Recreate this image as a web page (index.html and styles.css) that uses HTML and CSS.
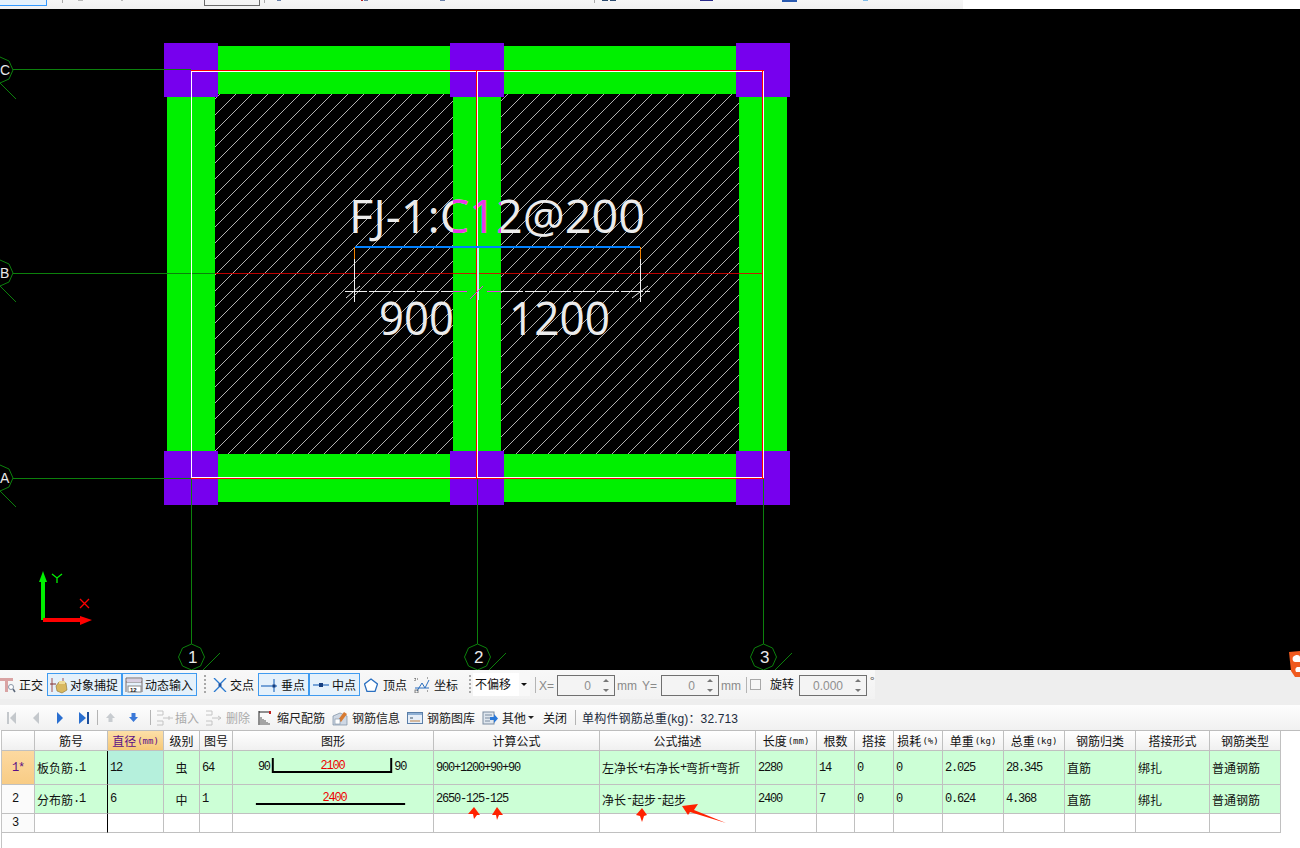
FILE: index.html
```html
<!DOCTYPE html>
<html lang="zh-CN">
<head>
<meta charset="utf-8">
<title>钢筋编辑</title>
<link rel="stylesheet" href="styles.css">
</head>
<body>
<div class="app">
  <div class="topstrip">
    <div class="topbar">
      <span class="top-btn"></span><span class="top-sep s1"></span><span class="top-mark m1"></span><span class="top-mark m2"></span>
      <span class="top-input"></span><span class="top-sep s2"></span><span class="top-mark m3"></span>
      <span class="top-mark m4"></span><span class="top-mark m5"></span><span class="top-mark m6"></span>
      <span class="top-sep s3"></span><span class="top-mark m7"></span><span class="top-mark m8"></span>
      <span class="top-mark m9"></span><span class="top-mark m10"></span><span class="top-mark m11"></span>
    </div>
  </div>

  <svg class="canvas" viewBox="0 9 1300 661" width="1300" height="661" xmlns="http://www.w3.org/2000/svg">
    <defs>
      <pattern id="hatch" patternUnits="userSpaceOnUse" width="16" height="16" patternTransform="translate(10 0)">
        <line x1="-1" y1="17" x2="17" y2="-1" stroke="#c4c4c4" stroke-width="0.9"/>
      </pattern>
      <clipPath id="midbeam"><rect x="453" y="190" width="48" height="60"/></clipPath>
    </defs>
    <rect x="0" y="9" width="1300" height="661" fill="#000"/>
    <rect x="215" y="94" width="238" height="360" fill="url(#hatch)"/>
    <rect x="501" y="94" width="238" height="360" fill="url(#hatch)"/>
    <g fill="#00f000">
      <rect x="218" y="46" width="232" height="48"/><rect x="504" y="46" width="232" height="48"/>
      <rect x="218" y="454" width="232" height="48"/><rect x="504" y="454" width="232" height="48"/>
      <rect x="167" y="97" width="48" height="354"/><rect x="453" y="97" width="48" height="354"/><rect x="739" y="97" width="48" height="354"/>
    </g>
    <g fill="#7700ee">
      <rect x="164" y="43" width="54" height="54"/><rect x="450" y="43" width="54" height="54"/><rect x="736" y="43" width="54" height="54"/>
      <rect x="164" y="451" width="54" height="54"/><rect x="450" y="451" width="54" height="54"/><rect x="736" y="451" width="54" height="54"/>
    </g>
    <g stroke="#0c800c" stroke-width="1" fill="none" shape-rendering="crispEdges">
      <path d="M13 69.500H191M13 478.500H191M13 273.500H215"/>
      <path d="M191.500 478V644M477.500 478V644M763.500 478V644"/>
    </g>
    <g stroke="#0c800c" stroke-width="1" fill="none">
      <polygon points="13,70 9,79 0,83 -9,79 -13,70 -9,61 0,57 9,61"/>
      <polygon points="13,273 9,282 0,286 -9,282 -13,273 -9,264 0,260 9,264"/>
      <polygon points="13,478 9,487 0,491 -9,487 -13,478 -9,469 0,465 9,469"/>
      <path d="M0 83L16 99M0 286L16 302M0 491L16 507"/>
      <polygon points="204.500,657 200.500,666 191.500,670 182.500,666 178.500,657 182.500,648 191.500,644 200.500,648"/>
      <polygon points="490.500,657 486.500,666 477.500,670 468.500,666 464.500,657 468.500,648 477.500,644 486.500,648"/>
      <polygon points="776.500,657 772.500,666 763.500,670 754.500,666 750.500,657 754.500,648 763.500,644 772.500,648"/>
      <path d="M203 670L220 653M489 670L506 653M775 670L792 653"/>
    </g>
    <g class="axis-label edge" fill="#e8e8e8">
      <text x="0" y="75">C</text><text x="0" y="278">B</text><text x="0" y="483">A</text>
    </g>
    <g class="axis-label" fill="#e8e8e8">
      <text x="188" y="663">1</text><text x="474" y="663">2</text><text x="760" y="663">3</text>
    </g>
    <path d="M215 273.500H763" stroke="#e00000" stroke-width="1" shape-rendering="crispEdges" opacity=".85"/>
    <g class="cad-text" fill="#ececec">
      <text x="349" y="233" textLength="296" lengthAdjust="spacingAndGlyphs">FJ-1:C12@200</text>
      <text x="379" y="335" textLength="75" lengthAdjust="spacingAndGlyphs">900</text>
      <text x="509" y="335" textLength="101" lengthAdjust="spacingAndGlyphs">1200</text>
    </g>
    <g class="cad-text" fill="#e838e8" clip-path="url(#midbeam)">
      <text x="349" y="233" textLength="296" lengthAdjust="spacingAndGlyphs">FJ-1:C12@200</text>
    </g>
    <g fill="none" shape-rendering="crispEdges">
      <path d="M191.500 70.500V478M477.500 70.500V478M763.500 70.500V478M191 71.500H764M191 477.500H764" stroke="#fff"/>
      <path d="M191 70.500H764M191 478.500H764" stroke="#ff0000"/>
      <path d="M476.500 70V478M762.500 70V478" stroke="#ff0000"/>
      <path d="M477.500 247V300" stroke="#b8fff4" stroke-width="2"/>
      <path d="M354.500 259V302M640.500 259V302" stroke="#f0f0f0"/>
      <path d="M345 291.500H453M501 291.500H650" stroke="#f0f0f0" stroke-dasharray="22 2"/>
      <path d="M453 291.500H467M487 291.500H501" stroke="#e838e8"/>
      <path d="M354.500 247V259M640.500 247V259" stroke="#f08000" stroke-width="1"/>
      <path d="M355 247H640" stroke="#0080ff" stroke-width="2"/>
    </g>
    <path d="M346 298L360 286M632 298L648 286" stroke="#e8e8e8" fill="none"/>
    <path d="M470 299L483 286" stroke="#e838e8" fill="none"/>
    <g>
      <path d="M41 620V582H39L42 574L43 571L44 574L47 582H45V620Z" fill="#00f000"/>
      <path d="M43 618H80V616L92 620L80 625V622H43Z" fill="#ff0000"/>
      <path d="M52 574L57 578L62 574M57 578V583" stroke="#00f000" stroke-width="1.300" fill="none"/>
      <path d="M80 599L89 608M89 599L80 608" stroke="#ff0000" stroke-width="1.300" fill="none"/>
    </g>
  </svg>

  <svg class="sogou" viewBox="0 0 12 26" width="12" height="26" xmlns="http://www.w3.org/2000/svg">
    <path d="M1 1L12 0V26H7L3 20Z" fill="#f05a1e"/>
    <path d="M5 6C8 3 12 4 12 6V11H7C5 11 4 8 5 6ZM9 16H12V21H8C7 19 7 17 9 16Z" fill="#fff"/>
  </svg>

  <div class="snapbar">
    <div class="snap-group">
      <div class="tool w-ortho">
        <svg class="ic16" viewBox="0 0 16 16"><path d="M0 1H13V4H8V15H5V4H0Z" fill="#d9a3a3"/><circle cx="11" cy="10" r="2.500" fill="#fff" stroke="#8a97a8"/><path d="M13 12L15 15" stroke="#5a6678" stroke-width="1.500"/></svg>
        <span>正交</span>
      </div>
      <div class="btn w-75">
        <svg class="ic18" viewBox="0 0 18 18"><path d="M2 2V16" stroke="#a05050"/><path d="M0 8H6" stroke="#803030"/><path d="M13 2V8" stroke="#a05050"/><path d="M6 10L9 6L16 7L17 14L12 17L7 15Z" fill="#d8b860" stroke="#8a7030" stroke-width=".6"/><rect x="9" y="5" width="6" height="3" fill="#eedc9a"/></svg>
        <span>对象捕捉</span>
      </div>
      <div class="btn w-75">
        <svg class="ic18" viewBox="0 0 18 18"><path d="M1 2H17M1 2V16M17 2V16M1 6H17" stroke="#7a6a6a" fill="none"/><rect x="2" y="3" width="14" height="3" fill="#d9cfe0"/><rect x="3" y="10" width="13" height="6" fill="#fff" stroke="#888"/><text class="icon-num" x="5" y="15.500">12</text></svg>
        <span>动态输入</span>
      </div>
      <span class="dots d1"></span>
      <div class="tool w-cross">
        <svg class="ic14" viewBox="0 0 14 14"><path d="M1 0L7 6L13 0M1 14L7 8L13 14" stroke="#2a7ad0" fill="none" stroke-width="1.300"/><rect x="5.500" y="5.500" width="3" height="3" fill="#1d4f9c"/></svg>
        <span>交点</span>
      </div>
      <div class="btn w-51">
        <svg class="ic18" viewBox="0 0 18 18"><path d="M0 10H16" stroke="#2a6fc0" stroke-width="1.200"/><path d="M13 3V16" stroke="#2a6fc0" stroke-width="1.200"/><rect x="11.500" y="8.500" width="3" height="3" fill="#163f80"/></svg>
        <span>垂点</span>
      </div>
      <div class="btn w-51">
        <svg class="ic18" viewBox="0 0 18 18"><path d="M1 9H17" stroke="#2a6fc0" stroke-width="1.200"/><rect x="7" y="7" width="4" height="4" fill="#163f80"/></svg>
        <span>中点</span>
      </div>
      <div class="tool w-vertex">
        <svg class="ic14" viewBox="0 0 14 14"><path d="M7 1L13.500 6L11 13.500H3L.5 6Z" fill="#fff" stroke="#2a6fc0" stroke-width="1.300"/></svg>
        <span>顶点</span>
      </div>
      <div class="tool w-coord">
        <svg class="ic16" viewBox="0 0 16 16"><path d="M3 14L8 6L11 11L15 3M1 11H15" stroke="#2a6fc0" fill="none"/><path d="M1 2H4M1 1V4M13 1H15M13 14H15" stroke="#555" fill="none" stroke-dasharray="1 1"/><rect x="1" y="13" width="3" height="3" fill="none" stroke="#555" stroke-width=".7"/></svg>
        <span>坐标</span>
      </div>
      <span class="dots d2"></span>
      <div class="combo">
        <span class="combo-value">不偏移</span>
        <span class="combo-arrow"></span>
      </div>
      <span class="vsep sep-a"></span>
      <span class="lbl w-xy">X=</span>
      <div class="spin w-58"><span>0</span><i class="spin-btns"><b class="up"></b><b class="down"></b></i></div>
      <span class="lbl w-mm1">mm</span>
      <span class="lbl w-xy2">Y=</span>
      <div class="spin w-58"><span>0</span><i class="spin-btns"><b class="up"></b><b class="down"></b></i></div>
      <span class="lbl w-mm2">mm</span>
      <span class="vsep sep-b"></span>
      <span class="check"></span>
      <span class="rot">旋转</span>
      <div class="spin w-68"><span>0.000</span><i class="spin-btns"><b class="up"></b><b class="down"></b></i></div>
      <span class="deg">°</span>
    </div>
  </div>

  <div class="actionbar">
    <svg class="nav" viewBox="0 0 10 12"><rect x="0" y="0" width="2" height="12" fill="#c4c8cc"/><path d="M9 0V12L3 6Z" fill="#c4c8cc"/></svg>
    <svg class="nav n2" viewBox="0 0 10 12"><path d="M8 0V12L2 6Z" fill="#c4c8cc"/></svg>
    <svg class="nav n2" viewBox="0 0 10 12"><path d="M2 0V12L8 6Z" fill="#2a6fd0"/></svg>
    <svg class="nav n2" viewBox="0 0 10 12"><path d="M0 0V12L7 6Z" fill="#2a6fd0"/><rect x="8" y="0" width="2" height="12" fill="#1d4f9c"/></svg>
    <span class="vsep bar s-97"></span>
    <svg class="arrow-ic a-up" viewBox="0 0 11 11"><path d="M5.500 1L10 6H7.500V10H3.500V6H1Z" fill="#c8ccd0"/></svg>
    <svg class="arrow-ic a-down" viewBox="0 0 11 11"><path d="M5.500 10L10 5H7.500V1H3.500V5H1Z" fill="#3a78d8"/></svg>
    <span class="vsep bar s-149"></span>
    <div class="act off a-insert">
      <svg class="ic18" viewBox="0 0 18 18"><path d="M1 2H7V6H1M1 12H7V16H1M7 9H17M13 7V11" stroke="#c4c4c4" fill="none"/></svg>
      <span>插入</span>
    </div>
    <div class="act off a-del">
      <svg class="ic18" viewBox="0 0 18 18"><path d="M1 2H7V6H1M1 12H7V16H1M7 9H16M13 7L16 9L13 11" stroke="#c4c4c4" fill="none"/></svg>
      <span>删除</span>
    </div>
    <div class="act a-scale">
      <svg class="ic14" viewBox="0 0 14 14"><path d="M1 0V14M1 1H12" stroke="#222" stroke-width="1"/><path d="M12 0V3" stroke="#c02020" stroke-width="2"/><path d="M3 6V14M5 8V14M7 9V14M9 11V14M11 12V14" stroke="#555"/></svg>
      <span>缩尺配筋</span>
    </div>
    <div class="act a-info">
      <svg class="ic16" viewBox="0 0 16 16"><path d="M1 6L8 3L15 6V15H1Z" fill="#cfd8e4" stroke="#7a8ca0" stroke-width=".7"/><path d="M6 10L12 2L15 4L9 12Z" fill="#d87a30"/><rect x="3" y="9" width="5" height="5" fill="#fff" stroke="#7a8ca0" stroke-width=".6"/></svg>
      <span>钢筋信息</span>
    </div>
    <div class="act a-lib">
      <svg class="ic16" viewBox="0 0 16 16"><rect x=".5" y="2.500" width="15" height="11" fill="#e6eef8" stroke="#5a7ea8"/><rect x="1" y="3" width="14" height="2" fill="#8fb0d4"/><rect x="3" y="7" width="3" height="2" fill="#90a0b0"/><path d="M3 11H13" stroke="#c08040"/></svg>
      <span>钢筋图库</span>
    </div>
    <div class="act a-other">
      <svg class="ic16" viewBox="0 0 16 16"><rect x="1" y="2" width="11" height="12" fill="#dfe6ee" stroke="#7a8ca0"/><path d="M3 5H10M3 8H8M3 11H8" stroke="#7a8ca0"/><path d="M8 7H12V4L16 8.500L12 13V10H8Z" fill="#2a78d8"/></svg>
      <span>其他</span>
      <span class="mini-arrow"></span>
    </div>
    <span class="act-close">关闭</span>
    <span class="vsep bar s-575"></span>
    <span class="total">单构件钢筋总重(kg)：32.713</span>
  </div>

  <div class="grid-wrap">
    <div class="grid">
      <div class="h corner"></div>
      <div class="h">筋号</div>
      <div class="h sel">直径<span class="u">(mm)</span></div>
      <div class="h">级别</div>
      <div class="h">图号</div>
      <div class="h">图形</div>
      <div class="h">计算公式</div>
      <div class="h">公式描述</div>
      <div class="h">长度<span class="u">(mm)</span></div>
      <div class="h">根数</div>
      <div class="h">搭接</div>
      <div class="h">损耗<span class="u">(%)</span></div>
      <div class="h">单重<span class="u">(kg)</span></div>
      <div class="h">总重<span class="u">(kg)</span></div>
      <div class="h">钢筋归类</div>
      <div class="h">搭接形式</div>
      <div class="h">钢筋类型</div>

      <div class="rh cur"><span class="m">1*</span></div>
      <div class="c">板负筋<span class="m">.1</span></div>
      <div class="c dia focus"><span class="m">12</span></div>
      <div class="c mid">虫</div>
      <div class="c"><span class="m">64</span></div>
      <div class="c shape">
        <svg viewBox="0 0 201 33" width="201" height="33"><text class="fig" x="25" y="19">90</text><path d="M40 7V21H159V7" fill="none" stroke="#000" stroke-width="2"/><text class="fig red" x="88" y="18">2100</text><text class="fig" x="162" y="19">90</text></svg>
      </div>
      <div class="c"><span class="m">900+1200+90+90</span></div>
      <div class="c">左净长<span class="m">+</span>右净长<span class="m">+</span>弯折<span class="m">+</span>弯折</div>
      <div class="c"><span class="m">2280</span></div>
      <div class="c"><span class="m">14</span></div>
      <div class="c"><span class="m">0</span></div>
      <div class="c"><span class="m">0</span></div>
      <div class="c"><span class="m">2.025</span></div>
      <div class="c"><span class="m">28.345</span></div>
      <div class="c">直筋</div>
      <div class="c">绑扎</div>
      <div class="c">普通钢筋</div>

      <div class="rh"><span class="m">2</span></div>
      <div class="c">分布筋<span class="m">.1</span></div>
      <div class="c dia"><span class="m">6</span></div>
      <div class="c mid">中</div>
      <div class="c"><span class="m">1</span></div>
      <div class="c shape">
        <svg viewBox="0 0 201 28" width="201" height="28"><path d="M23 19H173" stroke="#000" stroke-width="2"/><text class="fig red" x="90" y="16">2400</text></svg>
      </div>
      <div class="c"><span class="m">2650-125-125</span></div>
      <div class="c">净长<span class="m">-</span>起步<span class="m">-</span>起步</div>
      <div class="c"><span class="m">2400</span></div>
      <div class="c"><span class="m">7</span></div>
      <div class="c"><span class="m">0</span></div>
      <div class="c"><span class="m">0</span></div>
      <div class="c"><span class="m">0.624</span></div>
      <div class="c"><span class="m">4.368</span></div>
      <div class="c">直筋</div>
      <div class="c">绑扎</div>
      <div class="c">普通钢筋</div>

      <div class="rh"><span class="m">3</span></div>
      <div class="c e"></div><div class="c e dia"></div><div class="c e"></div><div class="c e"></div><div class="c e"></div>
      <div class="c e"></div><div class="c e"></div><div class="c e"></div><div class="c e"></div><div class="c e"></div>
      <div class="c e"></div><div class="c e"></div><div class="c e"></div><div class="c e"></div><div class="c e"></div><div class="c e"></div>
    </div>
    <svg class="marks" viewBox="0 0 1300 118" width="1300" height="118" xmlns="http://www.w3.org/2000/svg">
      <g fill="#ff2200" transform="translate(0 -730)">
        <path d="M474 807L480 815L477 815L474 819L473 814L468 814Z"/>
        <path d="M497 807L503 815L499 815L497 820L496 815L492 815Z"/>
        <path d="M642 808L647 815L644 816L642 822L640 816L636 815Z"/>
        <path d="M682 806L698 804L694 810L726 823L690 812L688 815Z"/>
      </g>
    </svg>
  </div>
</div>
</body>
</html>
```
FILE: styles.css
```css
* { box-sizing: border-box; }
html, body { margin: 0; padding: 0; background: #fff; }
body { width: 1300px; height: 848px; overflow: hidden; font-family: "Noto Sans CJK SC", "Liberation Sans", sans-serif; font-size: 12px; color: #111; }
.app { position: relative; width: 1300px; height: 848px; display: flex; flex-direction: column; }

/* top strip */
.topstrip { height: 9px; background: #fff; overflow: hidden; flex: none; }
.topbar { position: relative; width: 963px; height: 9px; background: linear-gradient(#f6f6f6, #f0f0f0); }
.top-btn, .top-sep, .top-mark, .top-input { position: absolute; display: block; }
.top-btn { left: -4px; top: -10px; width: 51px; height: 16px; background: #e5f1fb; border: 1px solid #3399ff; }
.top-sep { top: 0; width: 1px; height: 3px; background: #aaa; }
.top-sep.s1 { left: 62px; }
.top-sep.s2 { left: 264px; }
.top-sep.s3 { left: 594px; }
.top-mark { top: 0; height: 1px; width: 5px; background: #b8b8b8; }
.top-mark.m1 { left: 78px; }
.top-mark.m2 { left: 121px; width: 2px; }
.top-mark.m3 { left: 277px; background: #6a80a8; width: 4px; }
.top-mark.m4 { left: 361px; background: #c02020; width: 2px; }
.top-mark.m5 { left: 364px; background: #6a80a8; width: 4px; }
.top-mark.m6 { left: 440px; background: #6a80a8; width: 5px; }
.top-mark.m7 { left: 602px; background: #2c4a6e; width: 6px; }
.top-mark.m8 { left: 610px; background: #2c4a6e; width: 6px; }
.top-mark.m9 { left: 700px; background: #2a2a8a; width: 13px; }
.top-mark.m10 { left: 782px; background: #2a5ab0; width: 15px; height: 2px; }
.top-mark.m11 { left: 863px; background: #80bce8; width: 5px; }
.top-input { left: 204px; top: -10px; width: 56px; height: 16px; border: 1px solid #6a6a6a; }

/* CAD canvas */
.canvas { display: block; flex: none; width: 1300px; height: 661px; }
.axis-label text { font: 17px "Liberation Sans", sans-serif; }
.axis-label.edge text { font-size: 14px; }
.cad-text text { font: 46px "Open Sans", sans-serif; }
.sogou { position: absolute; right: 0; top: 651px; }

/* snap bar */
.snapbar { height: 35px; background: #eeeeee; flex: none; }
.snap-group { width: 875px; height: 29px; padding-top: 3px; display: flex; align-items: flex-start; background: linear-gradient(#f8f8f8, #f2f2f2); }
.tool, .btn { display: flex; align-items: center; height: 23px; flex: none; white-space: nowrap; }
.btn { border: 1px solid #3f9bf0; background: #e5f1fb; padding-left: 2px; gap: 2px; }
.w-75 { width: 75px; }
.w-51 { width: 51px; }
.w-ortho { width: 47px; gap: 3px; }
.w-cross { width: 48px; gap: 3px; padding-left: 3px; }
.w-vertex { width: 51px; gap: 5px; padding-left: 4px; }
.w-coord { width: 51px; gap: 4px; padding-left: 3px; }
.ic14 { width: 14px; height: 14px; flex: none; }
.ic16 { width: 16px; height: 16px; flex: none; }
.ic18 { width: 18px; height: 18px; flex: none; }
.icon-num { font: bold 6px "Liberation Sans", sans-serif; fill: #222; }
.dots { flex: none; width: 2px; height: 20px; margin-top: 2px; background-image: repeating-linear-gradient(#a8a8a8 0 2px, transparent 2px 4px); }
.d1 { margin-left: 7px; margin-right: 4px; }
.d2 { margin-left: 7px; margin-right: 2px; }
.combo { flex: none; width: 57px; height: 23px; display: flex; align-items: center; background: #f8f8f8; }
.combo-value { width: 46px; height: 23px; line-height: 22px; padding-left: 2px; background: #fff; }
.combo-arrow { margin-left: 2px; width: 0; height: 0; border-left: 3px solid transparent; border-right: 3px solid transparent; border-top: 3px solid #111; }
.vsep { flex: none; display: block; width: 1px; background: #b4b4b4; }
.sep-a { height: 16px; margin: 4px 2px 0 5px; }
.sep-b { height: 16px; margin: 4px 3px 0 0; }
.lbl { flex: none; font: 12px/24px "Liberation Sans", sans-serif; color: #8a8a8a; margin-top: 1px; }
.w-xy { width: 19px; padding-left: 1px; }
.w-xy2 { width: 18px; margin-left: -1px; margin-right: 1px; }
.w-mm1 { width: 28px; padding-left: 2px; }
.w-mm2 { width: 27px; padding-left: 2px; }
.spin { flex: none; height: 21px; margin-top: 2px; border: 1px solid #707070; background: #f4f4f4; display: flex; align-items: center; justify-content: flex-end; color: #8f8f8f; font: 12px "Liberation Sans", sans-serif; }
.w-58 { width: 58px; }
.w-68 { width: 68px; }
.spin-btns { display: flex; flex-direction: column; gap: 7px; width: 17px; align-items: center; margin-left: 6px; }
.spin-btns b { display: block; width: 0; height: 0; border-left: 3px solid transparent; border-right: 3px solid transparent; }
.spin-btns .up { border-bottom: 3px solid #777; }
.spin-btns .down { border-top: 3px solid #777; }
.check { flex: none; width: 11px; height: 11px; margin-top: 6px; border: 1px solid #a8a8a8; background: #f6f6f6; }
.rot { flex: none; margin: 0 5px 0 9px; line-height: 22px; }
.deg { flex: none; margin-left: 3px; line-height: 16px; color: #555; }

/* action bar */
.actionbar { height: 25px; flex: none; display: flex; align-items: center; padding-left: 7px; background: linear-gradient(#fdfdfd, #f1f1f1); }
.nav { width: 10px; height: 12px; flex: none; }
.n2 { margin-left: 14px; }
.bar { height: 15px; }
.s-97 { margin-left: 8px; }
.arrow-ic { flex: none; width: 11px; height: 11px; }
.a-up { margin-left: 7px; }
.a-down { margin-left: 12px; }
.s-149 { margin-left: 11px; }
.act { display: flex; align-items: center; flex: none; white-space: nowrap; color: #222; }
.off { color: #aaa; }
.a-insert { margin-left: 5px; gap: 1px; }
.a-del { margin-left: 6px; gap: 3px; }
.a-scale { margin-left: 8px; gap: 5px; }
.a-info { margin-left: 7px; gap: 4px; }
.a-lib { margin-left: 7px; gap: 4px; }
.a-other { margin-left: 7px; gap: 4px; }
.mini-arrow { width: 0; height: 0; border-left: 3px solid transparent; border-right: 3px solid transparent; border-top: 3px solid #222; margin-left: -2px; }
.act-close { flex: none; margin-left: 9px; }
.s-575 { margin-left: 8px; }
.total { flex: none; margin-left: 6px; font-family: "Liberation Sans", "Noto Sans CJK SC", sans-serif; color: #1c2b3c; white-space: nowrap; letter-spacing: .15px; }

/* grid */
.grid-wrap { position: relative; flex: 1; border-top: 1px solid #bdbdbd; border-left: 1px solid #c4c4c4; margin-left: 1px; }
.grid { display: grid; grid-template-columns: 33px 73px 56px 36px 33px 201px 166px 156px 61px 38px 39px 49px 61px 61px 71px 74px 71px; grid-template-rows: 20px 34px 29px 19px; width: 1279px; }
.grid > div { border-right: 1px solid #c0c0c0; border-bottom: 1px solid #c0c0c0; display: flex; align-items: center; overflow: hidden; white-space: nowrap; }
.h { justify-content: center; background: linear-gradient(#ffffff, #f0f0f0); }
.sel { background: linear-gradient(#fde0a8, #f6c878); color: #5a0f86; }
.u { font: 9px "DejaVu Sans Mono", monospace; margin-left: 1px; }
.rh { padding-left: 10px; background: #fbfbfb; }
.rh.cur { background: linear-gradient(#fdd9a0, #f8cc85); color: #5a0f86; }
.c { background: #ccffd6; padding-left: 2px; }
.c.e { background: #fff; }
.m { font: 12px "Liberation Mono", monospace; letter-spacing: -1.2px; }
.mid { justify-content: center; padding-left: 0; }
.dia { border-left: 1px solid #000; margin-left: -1px; padding-left: 2px; }
.c.focus { background: #b5f0dc; }
.shape { padding-left: 0; }
.shape svg { display: block; }
.fig { font: 12px "Liberation Mono", monospace; letter-spacing: -1.2px; fill: #111; }
.fig.red { fill: #ee0000; }
.marks { position: absolute; left: -2px; top: -1px; pointer-events: none; }
```
